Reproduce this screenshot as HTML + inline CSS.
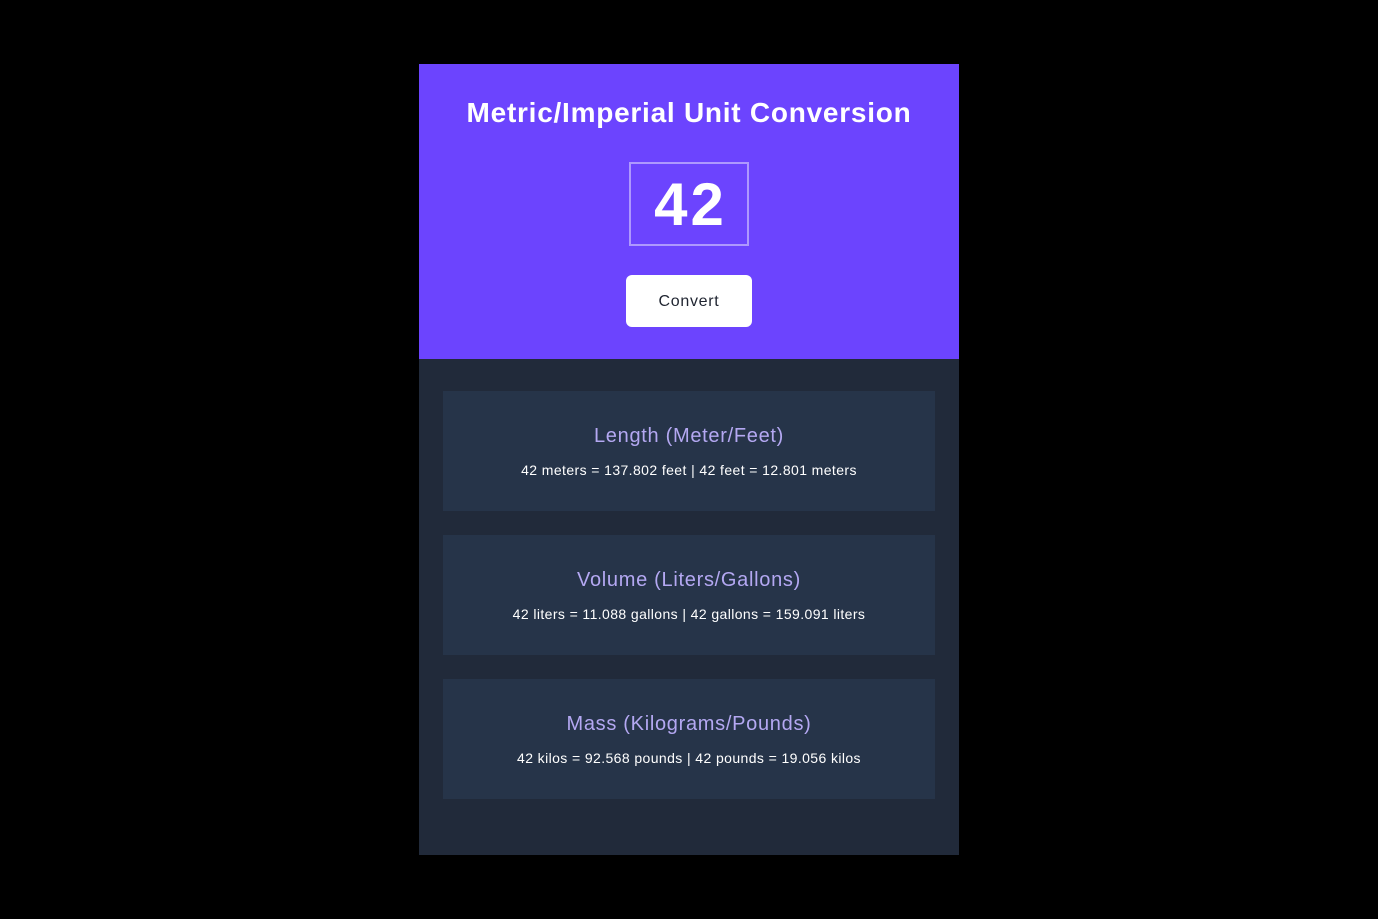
<!DOCTYPE html>
<html><head><style>
*{margin:0;padding:0;box-sizing:border-box}
body{width:1378px;height:919px;background:#000;font-family:"Liberation Sans",sans-serif;position:relative;overflow:hidden}
.wrap{position:absolute;left:419px;top:64px;width:540px;height:791px;background:#212a3a}
.top{height:295px;background:#6c44fe;position:relative;text-align:center;color:#fff}
h1{position:absolute;top:33px;left:0;right:0;font-size:28px;font-weight:bold;letter-spacing:0.75px}
.num{position:absolute;left:210px;top:98px;width:120px;height:84px;border:2px solid rgba(255,255,255,.45);font-size:60px;font-weight:bold;line-height:82px;letter-spacing:3px;text-indent:3px}
.btn{position:absolute;left:207px;top:211px;width:126px;height:52px;background:#fff;border-radius:6px;color:#1f2430;font-size:16px;line-height:54px;letter-spacing:0.7px}
.card{position:absolute;left:24px;width:492px;height:120px;background:#263449;text-align:center}
.card h2{font-weight:normal;font-size:20px;color:#b4a8f2;margin-top:33px;line-height:24px;letter-spacing:0.7px}
.card p{color:#fff;font-size:14px;margin-top:13px;line-height:18px;letter-spacing:0.4px}
</style></head><body>
<div class="wrap">
<div class="top">
<h1>Metric/Imperial Unit Conversion</h1>
<div class="num">42</div>
<div class="btn">Convert</div>
</div>
<div class="card" style="top:327px"><h2>Length (Meter/Feet)</h2><p>42 meters = 137.802 feet | 42 feet = 12.801 meters</p></div>
<div class="card" style="top:471px"><h2>Volume (Liters/Gallons)</h2><p>42 liters = 11.088 gallons | 42 gallons = 159.091 liters</p></div>
<div class="card" style="top:615px"><h2>Mass (Kilograms/Pounds)</h2><p>42 kilos = 92.568 pounds | 42 pounds = 19.056 kilos</p></div>
</div>
</body></html>
